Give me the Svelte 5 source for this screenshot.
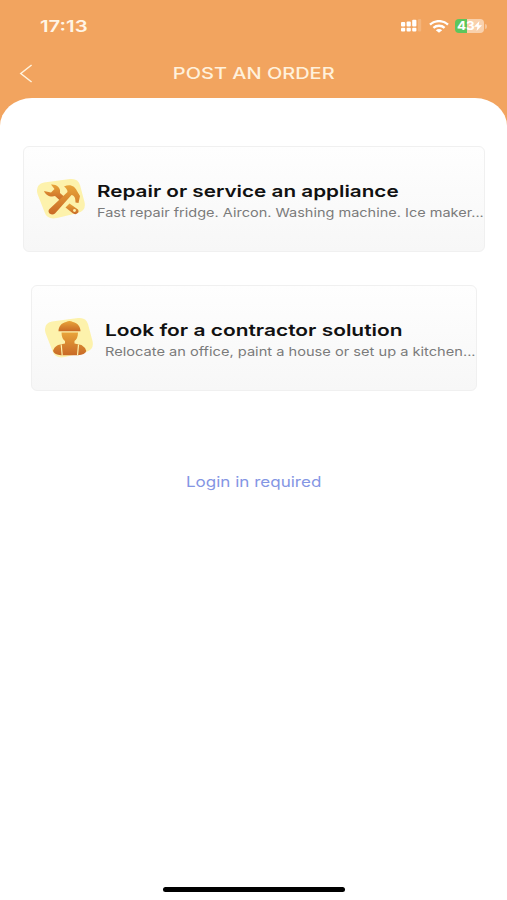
<script>
	const services = [
		{
			id: 'repair',
			title: 'Repair or service an appliance',
			summary: 'Fast repair fridge. Aircon. Washing machine. Ice maker...'
		},
		{
			id: 'contractor',
			title: 'Look for a contractor solution',
			summary: 'Relocate an office, paint a house or set up a kitchen...'
		}
	];
</script>

<div class="screen">
	<header class="header">
		<div class="status">
			<span class="status__time wide">17:13</span>
			<div class="status__icons">
				<svg class="status__signal" width="21" height="14" viewBox="0 0 21 14">
					<g fill="#fff">
						<rect x="0" y="3" width="4.2" height="4.4" rx="1" />
						<rect x="5.6" y="2.4" width="4.2" height="5" rx="1" />
						<rect x="11.2" y="0.8" width="4.2" height="6.6" rx="1" />
						<rect x="0" y="8.8" width="4.2" height="3.8" rx="1" />
						<rect x="5.6" y="8.8" width="4.2" height="3.8" rx="1" />
						<rect x="11.2" y="8.8" width="4.2" height="3.8" rx="1" />
					</g>
					<rect x="17" y="0" width="3.2" height="12.4" rx="1" fill="#fff" opacity="0.18" />
				</svg>
				<svg class="status__wifi" width="20" height="13" viewBox="0 0 20 13">
					<g fill="none" stroke="#fff" stroke-width="2.3">
						<path d="M1 4.6C6-.1 14-.1 19 4.6" />
						<path d="M4.4 7.9C7.5 5 12.5 5 15.6 7.9" />
					</g>
					<path d="M10 12.7 6.8 10.2C8.5 8.7 11.5 8.7 13.2 10.2Z" fill="#fff" />
				</svg>
				<div class="battery">
					<span class="battery__level wide">43</span>
					<svg class="battery__bolt" width="8" height="10" viewBox="0 0 8 10">
						<path d="M5.4 0 0 5.7H3.4L2.6 10 8 4.2H4.7Z" fill="#fff" />
					</svg>
				</div>
				<span class="battery__cap"></span>
			</div>
		</div>
		<nav class="nav">
			<button class="nav__back" aria-label="Back">
				<svg width="14" height="19" viewBox="0 0 14 19">
					<path d="M12.6 1 1.8 9.5 12.6 18" fill="none" stroke="#fff3dd" stroke-width="1.5" />
				</svg>
			</button>
			<h1 class="nav__title wide">POST AN ORDER</h1>
		</nav>
	</header>

	<main class="sheet">
		{#each services as service (service.id)}
			<button class="card card--{service.id}">
				<svg class="card__icon" width="50" height="42" viewBox="0 0 50 42">
					<defs>
						<linearGradient id="ink-{service.id}" x1="0" y1="0" x2="0" y2="1">
							<stop offset="0" stop-color="#e8a43a" />
							<stop offset="1" stop-color="#c96a26" />
						</linearGradient>
					</defs>
					<path
						d="M8 4.500 34 1Q42 0 44 7L48.500 24Q50.500 32.500 42 35L21 40Q11 42 8.500 34L1.500 16Q-1 6.500 8 4.500Z"
						fill="#fdf2ac"
					/>
					{#if service.id === 'repair'}
						<g fill="url(#ink-repair)">
							<path
								d="M15 6.500C20 6 25 9 24 15L28 18.500 24 22.500 19 18C15 19.500 9.500 17.500 8 13L15 14.500 18.500 11Z"
							/>
							<path
								d="M28 8.500C34 5.500 39 8 41 13L44 18 42.500 25 39.500 24.500C39.500 20 38.500 17.500 35.500 17L19 35.500Q16.500 37.500 13.500 35.500 11.500 33 13.500 31L31.500 14Q31.500 11 28 8.500Z"
							/>
							<path d="M33.500 25.500 42 31.500Q43.500 34 41 35.500 39 37 36.500 35L29.500 29.500Z" />
						</g>
						<circle cx="38.500" cy="32.500" r="1.400" fill="#fdf2ac" />
					{:else}
						<g fill="url(#ink-contractor)">
							<path
								d="M14.500 14.200C14.500 9.500 17.500 6 22 5Q25.500 3 29 5C33.500 6 36.500 9.500 36.500 14.200Z"
							/>
							<path
								d="M17.500 15.500H34C34 20 32.500 22.500 30.500 24V26.500L37.500 28Q41 30 42.300 34Q41 37.800 34 38.200H17Q10.500 37.800 9 34Q10 30 14 28L21 26.500V24C19 22.500 17.500 20 17.500 15.500Z"
							/>
						</g>
						<path
							d="M17.200 27.500 18.200 38.500M34.500 27.500 33.500 38.500"
							fill="none"
							stroke="#fdf2ac"
							stroke-width="1.200"
						/>
					{/if}
				</svg>
				<span class="card__text">
					<span class="card__title wide">{service.title}</span>
					<span class="card__summary wide">{service.summary}</span>
				</span>
			</button>
		{/each}

		<p class="login wide">Login in required</p>
		<div class="home-bar"></div>
	</main>
</div>

<style>
	:global(body) {
		background: #f2a45f;
	}

	.screen {
		display: flex;
		flex-direction: column;
		box-sizing: border-box;
		width: 507px;
		height: 900px;
		overflow: hidden;
		background: #f2a45f;
		font-family: Inter, 'Liberation Sans', sans-serif;
	}

	/* extended letterforms */
	.wide {
		display: block;
		width: max-content;
		white-space: nowrap;
		transform: scaleX(var(--stretch, 1.2));
		transform-origin: left center;
	}

	.header {
		flex: none;
		height: 98px;
	}

	.status {
		display: flex;
		align-items: center;
		justify-content: space-between;
		height: 52px;
		padding: 0 20px 0 40px;
	}

	.status__time {
		--stretch: 1.27;
		font-size: 16px;
		font-weight: 600;
		color: #fff5e6;
	}

	.status__icons {
		display: flex;
		align-items: center;
	}

	.status__signal {
		margin-right: 7px;
	}

	.status__wifi {
		margin-right: 6px;
	}

	.battery {
		display: flex;
		align-items: center;
		width: 29px;
		height: 14px;
		border-radius: 4px;
		background: linear-gradient(90deg, #5cc65c 43%, #f9d1ad 43%);
	}

	.battery__level {
		--stretch: 1.12;
		margin: 0 1px 0 2px;
		font-size: 12px;
		font-weight: 700;
		line-height: 14px;
		color: #fff;
	}

	.battery__cap {
		width: 2px;
		height: 5px;
		margin-left: 1px;
		border-radius: 0 2px 2px 0;
		background: #f7c498;
	}

	.nav {
		display: grid;
		grid-template-columns: 60px 1fr 60px;
		align-items: center;
		height: 43px;
	}

	.nav__back {
		display: flex;
		padding: 0 0 0 19px;
		border: none;
		background: none;
	}

	.nav__title {
		--stretch: 1.29;
		justify-self: center;
		margin: 0;
		font-size: 15.5px;
		font-weight: 500;
		line-height: 19px;
		color: #fff1dc;
		transform-origin: center;
	}

	.sheet {
		display: flex;
		flex: 1;
		flex-direction: column;
		align-items: center;
		gap: 33px;
		padding: 48px 0 8px;
		border-radius: 32px 32px 0 0 / 28px 28px 0 0;
		background: #fff;
	}

	.card {
		display: flex;
		flex: none;
		align-items: center;
		box-sizing: border-box;
		height: 106px;
		padding: 0 0 0 12px;
		overflow: hidden;
		border: 1px solid #f0f0f0;
		border-radius: 6px;
		background: linear-gradient(#fefefe, #f7f7f7);
		font-family: inherit;
		text-align: left;
	}

	.card--repair {
		--title-stretch: 1.254;
		--summary-stretch: 1.209;
		width: 462px;
	}

	.card--contractor {
		--title-stretch: 1.268;
		--summary-stretch: 1.219;
		width: 446px;
	}

	.card__icon {
		flex: none;
		margin-right: 11px;
	}

	.card__text {
		display: flex;
		flex: 1;
		flex-direction: column;
		min-width: 0;
		padding-top: 3px;
	}

	.card__title {
		--stretch: var(--title-stretch);
		font-size: 16.5px;
		font-weight: 600;
		line-height: 24px;
		color: #111;
	}

	.card__summary {
		--stretch: var(--summary-stretch);
		font-size: 12px;
		line-height: 20px;
		color: #7b7b7b;
	}

	.login {
		--stretch: 1.175;
		margin: 48px 0 0;
		font-size: 14.5px;
		line-height: 20px;
		color: #8496e4;
		transform-origin: center;
	}

	.home-bar {
		width: 182px;
		height: 5px;
		margin-top: auto;
		border-radius: 3px;
		background: #000;
	}
</style>
